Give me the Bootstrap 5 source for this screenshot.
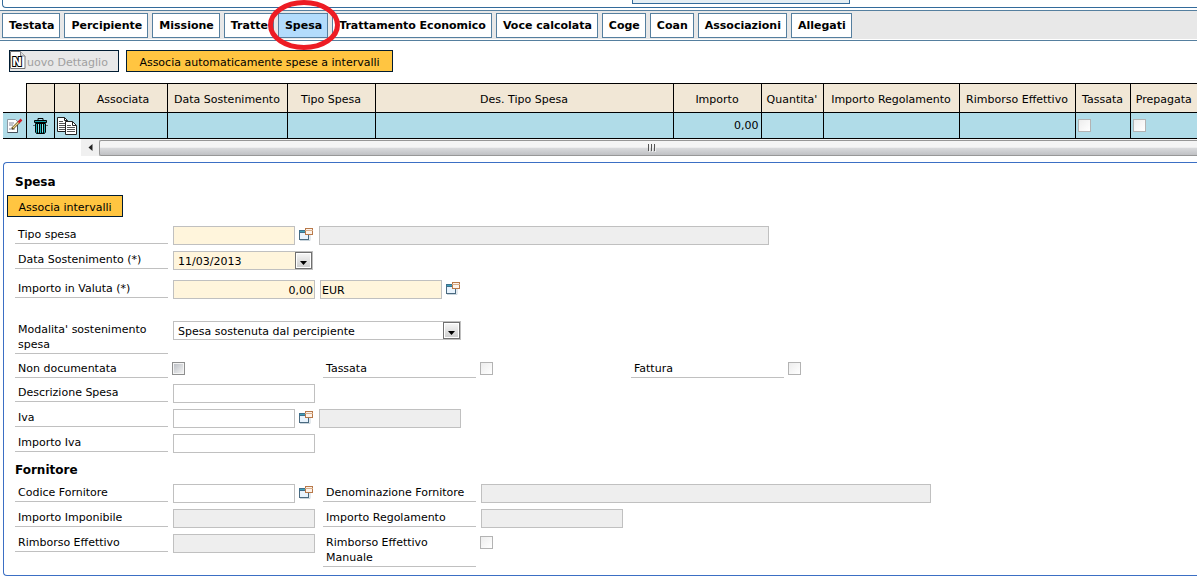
<!DOCTYPE html>
<html lang="it">
<head>
<meta charset="utf-8">
<meta name="viewport" content="width=device-width, initial-scale=1">
<title>Missione - Spesa</title>
<link href="https://cdn.jsdelivr.net/npm/bootstrap@5.3.0/dist/css/bootstrap.min.css" rel="stylesheet">
<style>
  body { font-family: "DejaVu Sans", Verdana, sans-serif; font-size: 11px; line-height: 15px; color: #000; background: #fff; overflow-x: hidden; }
  button, input, select { font-family: inherit; font-size: inherit; color: #000; }

  .upper-panel { height: 8px; margin-left: 2px; border: solid #336b9b; border-width: 0 0 1px 1px; border-bottom-left-radius: 4px; }
  .upper-box { width: 218px; height: 4px; margin-left: 52.7%; border: 1px solid #336b9b; border-top: 0; background: #e4eef4; }

  .tab-strip { margin-top: 2px; padding: 2px 2px 1px; gap: 4px; background: #e8e8e8; border-top: 1px solid #557f9f; box-shadow: 0 1px #fff, 0 2px #557f9f; }
  .tab-strip .nav-link { height: 25px; padding: 0 5px 0 6px; line-height: 24px; font-size: 11px; font-weight: bold; color: #000; background: #fff; border: 1px solid #557f9f; border-radius: 0; white-space: nowrap; }
  .tab-strip .nav-link.active { background: #b3dcfc; }
  .ring { left: 50%; top: 50%; transform: translate(-50%, -50%); z-index: 2; pointer-events: none; }

  .cmd { height: 22px; min-width: 116px; padding: 3px 9px 0; line-height: 17px; font-size: 11px; color: #000; background: #ffc541; border: 1px solid #001c33; border-radius: 0; white-space: nowrap; }
  .cmd:hover { background: #ffb61a; border-color: #001c33; color: #000; }
  .cmd-wide { min-width: 267px; }
  .cmd-new:disabled { min-width: 110px; padding: 3px 8px 0 2px; text-align: left; color: #a0a0a0; background: #e8e8e8; border-color: #001c33; opacity: 1; }
  .cmd-new .initial { display: inline-block; width: 15px; position: relative; font-weight: bold; font-size: 12px; line-height: 15px; color: #fff; -webkit-text-stroke: 2px #000; paint-order: stroke fill; }
  .cmd-bar { gap: 7px; padding: 10px 9px 11px; margin-top: 1px; }

  .grid { table-layout: fixed; width: calc(100% - 3px); margin-left: 3px; border-collapse: collapse; }
  .grid th { height: 29px; padding: 2px 0 0; font-weight: normal; text-align: center; background: #f1e7d6; border: 1px solid #000; white-space: nowrap; }
  .grid td { height: 26px; padding: 0 2px; background: #b0dce8; border: 1px solid #000; text-align: right; }
  .grid td:first-child { border-left: 0; }
  .grid .blank { background: #fff; border-top: 0; border-left: 0; }
  .grid th:last-child, .grid td:last-child { border-right: 0; }
  .grid td svg { display: block; margin: 0 auto; }
  .grid .chk { display: block; margin: 0; }

  .hscroll { height: 17px; margin-left: 81px; background: #f0f0f0; }
  .hscroll-arrow { width: 18px; }
  .hscroll-thumb { height: 16px; margin-top: 1px; padding-left: 8px; border: 1px solid #979797; border-right: 0; border-radius: 2px 0 0 2px; background: linear-gradient(#f5f5f5 0 45%, #d9dadc 50%, #c0c1c4); }

  .panel { margin: 6px 0 0 3px; padding: 12px 0 2px 11px; border: solid #3b6fc4; border-width: 1px 0 1px 1px; border-radius: 4px 0 0 4px; }
  .panel h2 { font-size: 12px; line-height: 15px; font-weight: bold; margin: 0; }
  .panel .forn { margin: 10px 0 6px; }
  .panel .cmd { margin: 5px 0 9px -8px; display: block; }
  .line { display: flex; align-items: flex-start; margin-bottom: 6px; }
  .pair { display: flex; align-items: flex-start; gap: 5px; width: 308px; flex: none; }
  .pair-lookup { width: 304px; }
  .cap { flex: none; width: 153px; padding: 1px 3px; border-bottom: 1px solid #c0c0c0; }
  .fld { width: 142px; height: 19px; padding: 2px 1px 0; border: 1px solid #c0c0c0; border-radius: 0; background: #fff; line-height: 15px; flex: none; }
  .fld:disabled { background: #eee; }
  .code { width: 122px; }
  .long { width: 450px; }
  .drop { height: 19px; padding: 2px 20px 0 4px; line-height: 15px; flex: none; border: 1px solid #c0c0c0; border-radius: 0; appearance: none; background-color: #fff; background-repeat: no-repeat; background-position: right center; background-image: url("data:image/svg+xml,%3Csvg xmlns='http://www.w3.org/2000/svg' width='17' height='17'%3E%3Cdefs%3E%3ClinearGradient id='g' x2='0' y2='1'%3E%3Cstop stop-color='%23f4f4f4'/%3E%3Cstop offset='1' stop-color='%23cfcfcf'/%3E%3C/linearGradient%3E%3C/defs%3E%3Crect x='.5' y='.5' width='16' height='16' fill='%23fff' stroke='%23707070'/%3E%3Crect x='2' y='2' width='13' height='13' fill='url(%23g)'/%3E%3Cpath d='M5 9h7l-3.5 4z'/%3E%3C/svg%3E"); }
  .req { background-color: #fff5dc; }
  .drop-date { width: 140px; }
  .drop-mode { width: 288px; }
  .chk { appearance: none; width: 13px; height: 13px; margin: 2px 0 0 -1px; border: 1px solid #b3b3b3; background: linear-gradient(135deg, #ededed, #fff); flex: none; }
  .chk:enabled { border-color: #8e8f8f; background: linear-gradient(135deg, #b8bcc2, #f6f6f6); box-shadow: inset 0 0 0 1px #f4f4f4; }
  .chk:checked { background: #557f9f; }
  .lookup { display: block; padding: 0; border: 0; background: none; width: 14px; height: 13px; margin-top: 2px; flex: none; line-height: 0; }
  .gap-line { margin-bottom: 10px; }
  .gap-block { margin-bottom: 22px; }
</style>
</head>
<body>
<svg width="0" height="0" class="position-absolute" aria-hidden="true">
  <symbol id="win" viewBox="0 0 14 13">
    <path d="M1 12.500h10v-6" fill="none" stroke="#c9d4dc"/>
    <rect x=".5" y="2.500" width="9" height="9" fill="#e8f3fd" stroke="#4a6a80"/>
    <path d="M0 2h10v3H0z" fill="#3f6f8c"/><path d="M1 3h7v1H1z" fill="#3fa0b8"/>
    <rect x="6.500" y=".5" width="7" height="6" fill="#fdf3ea" stroke="#b8794a"/>
    <path d="M6 2.500h8" stroke="#d9ae8a"/>
  </symbol>
</svg>

<div class="upper-panel"><div class="upper-box"></div></div>

<nav class="tab-strip nav flex-nowrap" aria-label="Sezioni">
  <a class="nav-link" href="#">Testata</a>
  <a class="nav-link" href="#">Percipiente</a>
  <a class="nav-link" href="#">Missione</a>
  <a class="nav-link" href="#">Tratte</a>
  <a class="nav-link active position-relative" href="#" aria-current="page">Spesa
    <svg class="ring position-absolute" width="74" height="54" viewBox="0 0 74 54" aria-hidden="true"><ellipse cx="38" cy="26" rx="33.500" ry="22.500" fill="none" stroke="#ed1c24" stroke-width="5"/></svg>
  </a>
  <a class="nav-link" href="#">Trattamento Economico</a>
  <a class="nav-link" href="#">Voce calcolata</a>
  <a class="nav-link" href="#">Coge</a>
  <a class="nav-link" href="#">Coan</a>
  <a class="nav-link" href="#">Associazioni</a>
  <a class="nav-link" href="#">Allegati</a>
</nav>

<main>
  <div class="cmd-bar d-flex">
    <button class="btn cmd cmd-new position-relative" type="button" disabled>
      <svg class="position-absolute top-0 start-0" width="16" height="18" viewBox="0 0 16 18" aria-hidden="true">
        <path d="M.5.5h10l4.500 4.500v12.500H.5z" fill="#fff" stroke="#777"/>
        <path d="M10.500.5v4.500h4.500" fill="#ddd" stroke="#888"/>
      </svg><span class="initial">N</span>uovo Dettaglio</button>
    <button class="btn cmd cmd-wide" type="button">Associa automaticamente spese a intervalli</button>
  </div>

  <table class="grid">
    <colgroup>
      <col style="width:23px"><col style="width:28px"><col style="width:25px"><col style="width:88px"><col style="width:120px"><col style="width:88px"><col><col style="width:88px"><col style="width:62px"><col style="width:136px"><col style="width:116px"><col style="width:55px"><col style="width:67px">
    </colgroup>
    <thead>
      <tr><td class="blank"></td><th></th><th></th><th>Associata</th><th>Data Sostenimento</th><th>Tipo Spesa</th><th>Des. Tipo Spesa</th><th>Importo</th><th>Quantita'</th><th>Importo Regolamento</th><th>Rimborso Effettivo</th><th>Tassata</th><th>Prepagata</th></tr>
    </thead>
    <tbody>
      <tr>
        <td><svg width="17" height="16" viewBox="0 0 17 16" aria-label="Modifica"><path d="M1.500 1.500h8l2 2v11h-10z" fill="#fff" stroke="#8d99a3"/><path d="M11.500 6v8.500h-10" fill="none" stroke="#44505a"/><path d="M3 5h5M3 7h4M3 11h6" stroke="#889"/><path d="M6 11l7-7" stroke="#5b4a20" stroke-width="2.500"/><path d="M7 10l6-6" stroke="#f0d58a" stroke-width="1.200"/><path d="M12.500 4.500l3-3" stroke="#d3202a" stroke-width="2.500"/></svg></td>
        <td><svg width="15" height="16" viewBox="0 0 15 16" aria-label="Elimina"><path d="M5 .5h5v2M5 .5v2" fill="none" stroke="#000"/><path d="M1.500 2.500h12v2h-12z" fill="#18a0a8" stroke="#000"/><path d="M2.500 5.500h10V14l-1 1.500h-8L2.500 14z" fill="#18b0b8" stroke="#000"/><path d="M4.500 6v9M6.500 6v9M8.500 6v9M10.500 6v9" stroke="#000"/><path d="M5.500 6v8M9.500 6v8" stroke="#8fe8ec"/><path d="M.5 7.500h1M13.500 7.500h1" stroke="#000"/></svg></td>
        <td><svg width="20" height="18" viewBox="0 0 20 18" aria-label="Copia"><path d="M.5.5h7l3 3v11H.5z" fill="#fff" stroke="#222"/><path d="M7.500.5v3h3" fill="none" stroke="#222"/><path d="M2 4.500h4M2 6.500h7M2 8.500h7M2 10.500h7M2 12.500h7" stroke="#555"/><path d="M8.500 4.500h7l4 4v9h-11z" fill="#fff" stroke="#222"/><path d="M15.500 4.500v4h4" fill="none" stroke="#222"/><path d="M10 8.500h4M10 10.500h8M10 12.500h8M10 14.500h8" stroke="#555"/></svg></td>
        <td></td><td></td><td></td><td></td><td>0,00</td><td></td><td></td><td></td>
        <td><input class="chk" type="checkbox" disabled aria-label="Tassata"></td>
        <td><input class="chk" type="checkbox" disabled aria-label="Prepagata"></td>
      </tr>
    </tbody>
  </table>
  <div class="hscroll d-flex" aria-hidden="true">
    <div class="hscroll-arrow d-flex align-items-center justify-content-center"><svg width="5" height="7"><path d="M4.500 0v7L.5 3.500z" fill="#222"/></svg></div>
    <div class="hscroll-thumb flex-grow-1 d-flex align-items-center justify-content-center"><svg width="9" height="8"><path d="M.5 0v7M3.500 0v7M6.500 0v7" stroke="#555"/><path d="M1.500 1v7M4.500 1v7M7.500 1v7" stroke="#eee"/></svg></div>
  </div>

  <form class="panel">
    <h2>Spesa</h2>
    <button class="btn cmd" type="button">Associa intervalli</button>

    <div class="line">
      <div class="pair pair-lookup"><label class="cap" for="tipo">Tipo spesa</label><div class="d-flex gap-1"><input class="fld code req" id="tipo" type="text"><button class="lookup" type="button" aria-label="Cerca tipo spesa"><svg width="14" height="13"><use href="#win"/></svg></button></div></div>
      <input class="fld long" type="text" disabled aria-label="Descrizione tipo spesa">
    </div>
    <div class="line gap-line">
      <div class="pair"><label class="cap" for="data">Data Sostenimento (*)</label><select class="drop drop-date req" id="data"><option>11/03/2013</option></select></div>
    </div>
    <div class="line gap-block">
      <div class="pair"><label class="cap" for="valuta">Importo in Valuta (*)</label>
        <input class="fld req text-end" id="valuta" type="text" value="0,00">
        <div class="d-flex gap-1"><input class="fld code req" type="text" value="EUR" aria-label="Valuta"><button class="lookup" type="button" aria-label="Cerca valuta"><svg width="14" height="13"><use href="#win"/></svg></button></div>
      </div>
    </div>
    <div class="line">
      <div class="pair"><label class="cap" for="modo">Modalita' sostenimento spesa</label><select class="drop drop-mode" id="modo"><option>Spesa sostenuta dal percipiente</option></select></div>
    </div>
    <div class="line">
      <div class="pair"><label class="cap" for="nondoc">Non documentata</label><input class="chk" id="nondoc" type="checkbox"></div>
      <div class="pair"><label class="cap" for="tassata">Tassata</label><input class="chk" id="tassata" type="checkbox" disabled></div>
      <div class="pair"><label class="cap" for="fattura">Fattura</label><input class="chk" id="fattura" type="checkbox" disabled></div>
    </div>
    <div class="line">
      <div class="pair"><label class="cap" for="descr">Descrizione Spesa</label><input class="fld" id="descr" type="text"></div>
    </div>
    <div class="line">
      <div class="pair pair-lookup"><label class="cap" for="iva">Iva</label><div class="d-flex gap-1"><input class="fld code" id="iva" type="text"><button class="lookup" type="button" aria-label="Cerca iva"><svg width="14" height="13"><use href="#win"/></svg></button></div></div>
      <input class="fld" type="text" disabled aria-label="Descrizione iva">
    </div>
    <div class="line">
      <div class="pair"><label class="cap" for="impiva">Importo Iva</label><input class="fld" id="impiva" type="text"></div>
    </div>

    <h2 class="forn">Fornitore</h2>
    <div class="line">
      <div class="pair"><label class="cap" for="codice">Codice Fornitore</label><div class="d-flex gap-1"><input class="fld code" id="codice" type="text"><button class="lookup" type="button" aria-label="Cerca fornitore"><svg width="14" height="13"><use href="#win"/></svg></button></div></div>
      <div class="pair"><label class="cap" for="denom">Denominazione Fornitore</label><input class="fld long" id="denom" type="text" disabled></div>
    </div>
    <div class="line">
      <div class="pair"><label class="cap" for="impon">Importo Imponibile</label><input class="fld" id="impon" type="text" disabled></div>
      <div class="pair"><label class="cap" for="impreg">Importo Regolamento</label><input class="fld" id="impreg" type="text" disabled></div>
    </div>
    <div class="line">
      <div class="pair"><label class="cap" for="rimb">Rimborso Effettivo</label><input class="fld" id="rimb" type="text" disabled></div>
      <div class="pair"><label class="cap" for="rimbman">Rimborso Effettivo Manuale</label><input class="chk" id="rimbman" type="checkbox" disabled></div>
    </div>
  </form>
</main>
<script src="https://cdn.jsdelivr.net/npm/bootstrap@5.3.0/dist/js/bootstrap.bundle.min.js"></script>
</body>
</html>
